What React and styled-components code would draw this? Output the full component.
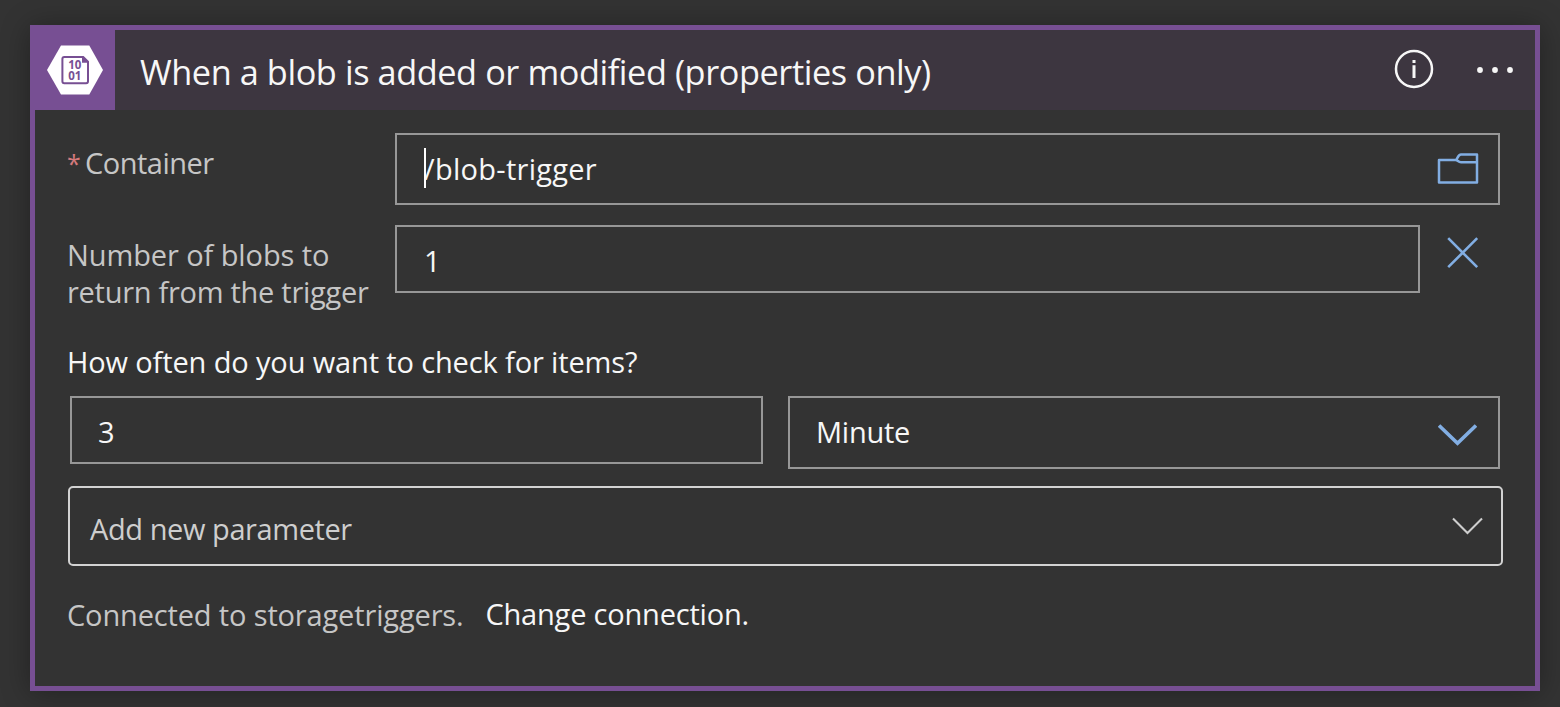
import React from "react";
import styled, { createGlobalStyle } from "styled-components";

const GlobalStyle = createGlobalStyle`
  * { box-sizing: border-box; }
  body {
    margin: 0;
    background: #333333;
    font-family: "Open Sans", "Noto Sans", sans-serif;
    font-size: 29px;
    color: #f7f7f7;
    overflow: hidden;
  }
`;

const Canvas = styled.main`
  height: 707px;
  padding: 25px 20px 16px 30px;
`;

const Card = styled.section`
  height: 666px;
  border: 5px solid #774f93;
  background: #333333;
  box-shadow: 0 2px 28px rgba(0, 0, 0, 0.33);
`;

const Header = styled.header`
  display: flex;
  align-items: center;
  height: 80px;
  padding-right: 20px;
  background: #3d3640;
`;

const Brand = styled.div`
  display: flex;
  align-items: center;
  width: 80px;
  height: 80px;
  padding-left: 11px;
  background: #774f93;
`;

const Title = styled.h1`
  flex: 1;
  margin: 0;
  padding: 3px 0 0 25px;
  font-size: 34.3px;
  font-weight: 400;
  line-height: 50px;
  letter-spacing: -0.428px;
  white-space: nowrap;
`;

const HeaderActions = styled.div`
  display: flex;
  align-items: center;
  gap: 41px;
`;

const IconButton = styled.button`
  display: flex;
  padding: 0;
  border: 0;
  background: none;
  color: ${(p) => p.$color || "#82aee3"};
`;

const InfoButton = styled(IconButton)`
  padding-bottom: 2px;
`;

const Body = styled.div`
  padding: 23px 35px 0 32px;
`;

const FieldRow = styled.div`
  display: flex;
  align-items: flex-start;
  height: ${(p) => p.$height}px;
  margin-bottom: ${(p) => p.$gap}px;
`;

const Label = styled.label`
  display: flex;
  width: 328px;
  padding-top: 11px;
  line-height: 37px;
  color: #c6c6c6;
  white-space: nowrap;
`;

const Required = styled.span`
  width: 18px;
  font-size: 25px;
  line-height: 38px;
  color: #d4797c;
`;

const Spaced = styled.span`
  display: block;
  letter-spacing: ${(p) => p.$by}px;
  white-space: nowrap;
`;

const Field = styled.div`
  display: flex;
  align-items: center;
  justify-content: space-between;
  flex: ${(p) => (p.$width ? "none" : 1)};
  width: ${(p) => (p.$width ? p.$width + "px" : "auto")};
  height: ${(p) => p.$height}px;
  padding: ${(p) => p.$drop || 0}px 19px 0 ${(p) => p.$inset || 27}px;
  border: 2px solid #979797;
  line-height: 40px;
`;

const CaretValue = styled.div`
  position: relative;
  display: flex;
`;

const Caret = styled.i`
  position: absolute;
  left: 0;
  top: -1px;
  width: 2px;
  height: 40px;
  background: #ffffff;
`;

const RemoveButton = styled(IconButton)`
  width: 80px;
  padding: 12px 0 0 27px;
`;

const Question = styled.div`
  height: 37px;
  margin-bottom: 16px;
  line-height: 37px;
`;

const Recurrence = styled.div`
  display: flex;
  align-items: flex-start;
  gap: 25px;
  height: 73px;
  padding-left: 3px;
  margin-bottom: 17px;
`;

const UnitLabel = styled(Spaced)`
  padding-bottom: 1px;
`;

const ParameterSelect = styled.div`
  display: flex;
  align-items: center;
  justify-content: space-between;
  width: 1435px;
  height: 80px;
  margin-left: 1px;
  padding: 5px 18px 0 20px;
  border: 2px solid #d2d2d2;
  border-radius: 5px;
  line-height: 40px;
  color: #cecece;

  svg { margin-top: -5px; }
`;

const Footer = styled.footer`
  display: flex;
  align-items: flex-start;
  gap: 22px;
  padding-top: 30px;
  line-height: 37px;
  color: #c6c6c6;
`;

const ConnectionLink = styled.a`
  color: #f7f7f7;
  line-height: 35px;
`;

const BlobIcon = () => (
  <svg width="58" height="52" viewBox="46 44 58 52" fill="none">
    <path d="M61 45.5H89.3L103 70L89.3 94.5H61L47 70Z" fill="#fff" />
    <path
      d="M64.3 56.9H83.2L88 61.7V81.3Q88 83.2 86.1 83.2H64.3Q62.4 83.2 62.4 81.3V58.8Q62.4 56.9 64.3 56.9Z"
      stroke="#774f93"
      strokeWidth="2"
    />
    <path d="M82 56.2L88.8 62.8H82Z" fill="#774f93" />
    <text
      fill="#774f93"
      fontFamily="Open Sans, sans-serif"
      fontSize="11.5"
      fontWeight="700"
    >
      <tspan x="68.2" y="68.6">10</tspan>
      <tspan x="68.2" y="79.9">01</tspan>
    </text>
  </svg>
);

const InfoIcon = () => (
  <svg width="40" height="40" viewBox="1393.5 49 40 40" fill="none">
    <circle cx="1413.5" cy="69" r="18" stroke="currentColor" strokeWidth="2.5" />
    <path d="M1413.5 60V63M1413.5 65.3V78" stroke="currentColor" strokeWidth="3" />
  </svg>
);

const MoreIcon = () => (
  <svg width="40" height="10" viewBox="1475 65 40 10" fill="currentColor">
    <circle cx="1480" cy="70" r="2.9" />
    <circle cx="1495" cy="70" r="2.9" />
    <circle cx="1510" cy="70" r="2.9" />
  </svg>
);

const FolderIcon = () => (
  <svg width="42" height="32" viewBox="1437 153 42 32" fill="none">
    <path
      d="M1439 160H1455.5C1457.5 160 1457.5 154.6 1461 154.6H1477V182.6H1439ZM1455.5 160C1458 160 1458 162.2 1461 162.2H1477"
      stroke="currentColor"
      strokeWidth="2.5"
      strokeLinejoin="round"
    />
  </svg>
);

const CloseIcon = () => (
  <svg width="32" height="32" viewBox="0 0 32 32" fill="none">
    <path d="M1.2 1.2L30.2 30.2M30.2 1.2L1.2 30.2" stroke="currentColor" strokeWidth="2.6" />
  </svg>
);

const ChevronIcon = ({ width, height, stroke }) => (
  <svg width={width} height={height} viewBox={`0 0 ${width} ${height}`} fill="none">
    <path
      d={`M1 1.5L${width / 2} ${height - stroke}L${width - 1} 1.5`}
      stroke="currentColor"
      strokeWidth={stroke}
    />
  </svg>
);

const SelectArrow = styled(IconButton)`
  padding: 5px 2px 0 0;
`;

export default function App() {
  return (
    <Canvas>
      <GlobalStyle />
      <Card>
        <Header>
          <Brand>
            <BlobIcon />
          </Brand>
          <Title>When a blob is added or modified (properties only)</Title>
          <HeaderActions>
            <InfoButton $color="#f7f7f7" aria-label="Info">
              <InfoIcon />
            </InfoButton>
            <IconButton $color="#f7f7f7" aria-label="More">
              <MoreIcon />
            </IconButton>
          </HeaderActions>
        </Header>
        <Body>
          <FieldRow $height={72} $gap={20}>
            <Label>
              <Required>*</Required>
              <Spaced $by={-0.5}>Container</Spaced>
            </Label>
            <Field $height={72}>
              <CaretValue>
                <Caret />
                <Spaced $by={0.28}>/blob-trigger</Spaced>
              </CaretValue>
              <IconButton aria-label="Browse">
                <FolderIcon />
              </IconButton>
            </Field>
          </FieldRow>
          <FieldRow $height={85} $gap={33}>
            <Label>
              <div>
                <Spaced $by={-0.09}>Number of blobs to</Spaced>
                <Spaced $by={-0.277}>return from the trigger</Spaced>
              </div>
            </Label>
            <Field $height={68} $drop={3}>
              1
            </Field>
            <RemoveButton aria-label="Remove">
              <CloseIcon />
            </RemoveButton>
          </FieldRow>
          <Question>
            <Spaced $by={-0.134}>How often do you want to check for items?</Spaced>
          </Question>
          <Recurrence>
            <Field $width={693} $height={68} $drop={3} $inset={26}>
              3
            </Field>
            <Field $height={73} $inset={26}>
              <UnitLabel $by={-0.262}>Minute</UnitLabel>
              <SelectArrow aria-label="Open">
                <ChevronIcon width={39} height={23} stroke={3.7} />
              </SelectArrow>
            </Field>
          </Recurrence>
          <ParameterSelect>
            <Spaced $by={-0.42}>Add new parameter</Spaced>
            <ChevronIcon width={31} height={18} stroke={2.1} />
          </ParameterSelect>
          <Footer>
            <Spaced $by={-0.151}>Connected to storagetriggers.</Spaced>
            <ConnectionLink>
              <Spaced $by={-0.205}>Change connection.</Spaced>
            </ConnectionLink>
          </Footer>
        </Body>
      </Card>
    </Canvas>
  );
}
